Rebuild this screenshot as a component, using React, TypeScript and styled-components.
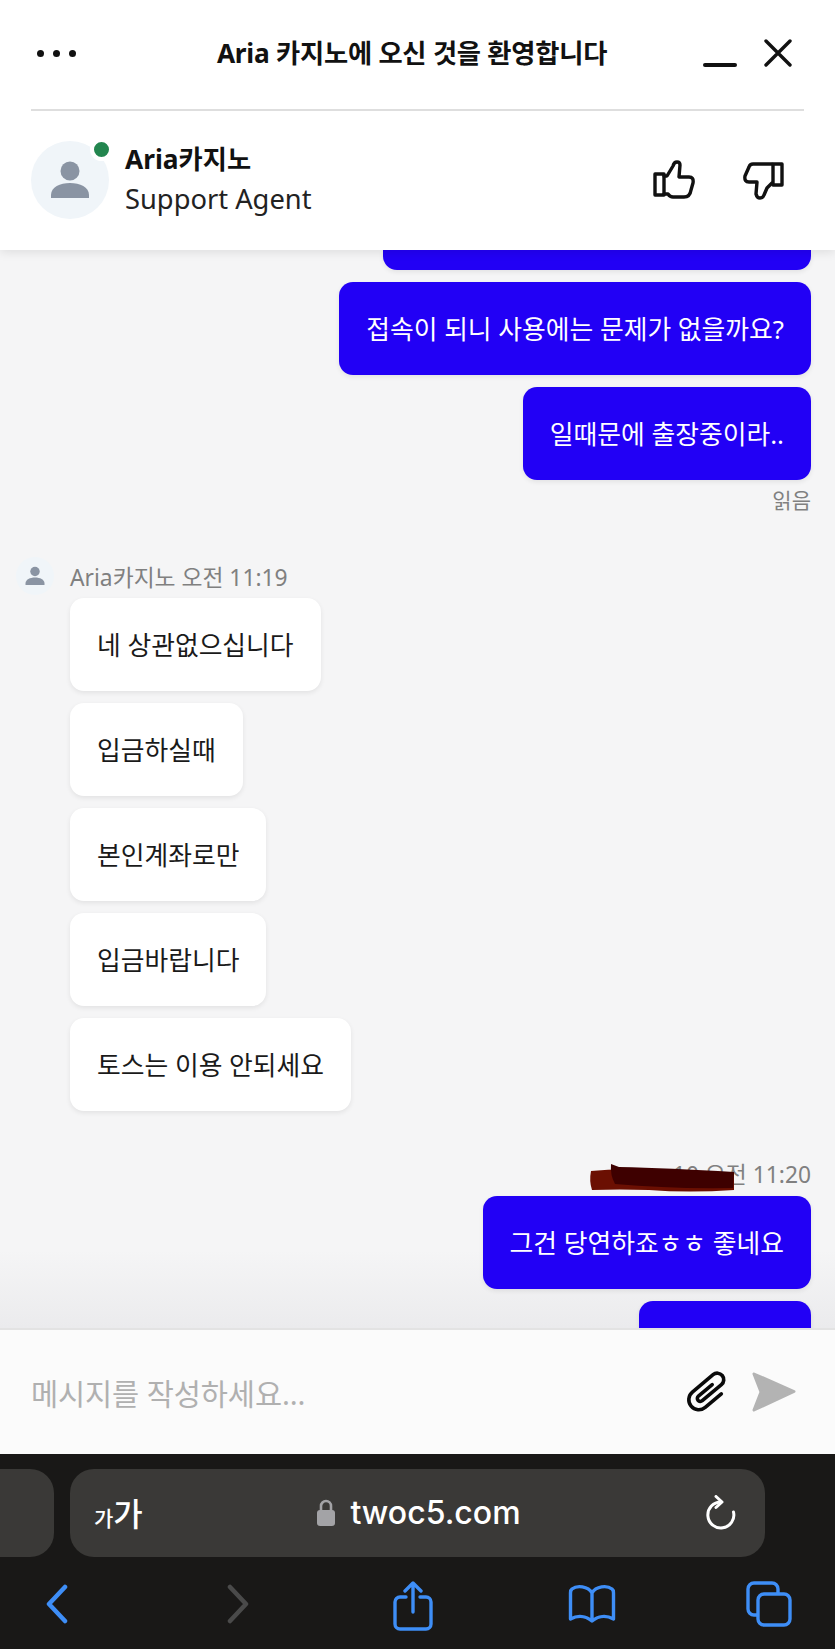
import React from "react";
import styled, { createGlobalStyle } from "styled-components";

const GlobalStyle = createGlobalStyle`
  html, body {
    margin: 0;
    padding: 0;
    background: #f5f5f6;
  }
  * {
    box-sizing: border-box;
  }
  body {
    font-family: "Noto Sans", "Noto Sans CJK KR", sans-serif;
  }
`;

const Page = styled.div`
  width: 835px;
  height: 1649px;
  display: flex;
  flex-direction: column;
  overflow: hidden;
`;

const Header = styled.header`
  height: 250px;
  flex: none;
  background: #fff;
  box-shadow: 0 2px 10px rgba(0, 0, 0, 0.1);
  position: relative;
  z-index: 2;
`;

const TitleBar = styled.div`
  height: 111px;
  margin: 0 31px;
  padding-bottom: 3px;
  display: flex;
  align-items: center;
  justify-content: space-between;
  border-bottom: 2px solid #dedede;
`;

const Dots = styled.div`
  display: flex;
  gap: 9px;
  margin-left: 6px;
  width: 85px;
  span {
    width: 7px;
    height: 7px;
    border-radius: 50%;
    background: #111;
  }
`;

const Title = styled.h1`
  margin: 0;
  font-size: 26.300px;
  font-weight: 700;
  color: #111;
  line-height: 34px;
  letter-spacing: -0.25px;
`;

const WindowButtons = styled.div`
  width: 100px;
  display: flex;
  justify-content: flex-end;
  align-items: center;
  gap: 27px;
  padding-right: 10px;
  margin-right: 2px;
`;

const AgentRow = styled.div`
  display: flex;
  align-items: center;
  padding: 29px 31px 0;
`;

const BigAvatar = styled.div`
  width: 78px;
  height: 78px;
  border-radius: 50%;
  background: #f0f5f9;
  position: relative;
  display: flex;
  align-items: center;
  justify-content: center;
  flex: none;
`;

const StatusDot = styled.span`
  position: absolute;
  top: -3px;
  right: -4px;
  width: 23px;
  height: 23px;
  border-radius: 50%;
  background: #23864f;
  border: 4px solid #fff;
`;

const AgentText = styled.div`
  margin-left: 16px;
  flex: 1;
  display: flex;
  flex-direction: column;
`;

const AgentName = styled.div`
  font-size: 26.300px;
  font-weight: 700;
  line-height: 38px;
  color: #111;
`;

const AgentRole = styled.div`
  font-size: 27.300px;
  line-height: 42px;
  color: #222;
`;

const Rating = styled.div`
  display: flex;
  gap: 48px;
  margin-right: 19px;
`;

const Chat = styled.main`
  flex: 1;
  overflow: hidden;
  display: flex;
  flex-direction: column;
  background: linear-gradient(
    to bottom,
    #f5f5f6 0,
    #f5f5f6 1000px,
    #ebebed 100%
  );
  padding: 0 24px 0 0;
`;

const Bubble = styled.div<{ $mine?: boolean }>`
  align-self: ${(p) => (p.$mine ? "flex-end" : "flex-start")};
  height: 93px;
  margin: 0 0 12px ${(p) => (p.$mine ? "0" : "70px")};
  padding: 0 27px;
  display: flex;
  align-items: center;
  border-radius: 14px;
  font-size: 25.800px;
  line-height: 36px;
  background: ${(p) => (p.$mine ? "#2200f5" : "#fff")};
  color: ${(p) => (p.$mine ? "#fff" : "#1a1a1a")};
  box-shadow: 0 2px 5px rgba(0, 0, 0, 0.08);
  flex: none;
`;

const ClippedTop = styled(Bubble)`
  width: 428px;
  height: 20px;
  border-radius: 0 0 14px 14px;
`;

const ClippedBottom = styled(Bubble)`
  width: 172px;
  height: 28px;
  margin-bottom: 0;
  border-radius: 14px 14px 0 0;
`;

const ReadMark = styled.div`
  align-self: flex-end;
  font-size: 21px;
  line-height: 30px;
  color: #808080;
  margin-top: -7px;
`;

const SenderRow = styled.div`
  display: flex;
  align-items: center;
  gap: 16px;
  height: 38px;
  margin: 42px 0 3px 16px;
  font-size: 22.800px;
  color: #808080;
`;

const SmallAvatar = styled.div`
  width: 38px;
  height: 38px;
  border-radius: 50%;
  background: #f0f5f9;
  display: flex;
  align-items: center;
  justify-content: center;
`;

const SentTime = styled.div`
  position: relative;
  align-self: flex-end;
  height: 30px;
  line-height: 30px;
  font-size: 22.800px;
  color: #808080;
  margin: 37px 0 6px;
`;

const Scribble = styled.svg`
  position: absolute;
  right: 76px;
  top: 3px;
`;

const Composer = styled.div`
  height: 126px;
  flex: none;
  background: #fbfbfb;
  border-top: 2px solid #e3e3e3;
  display: flex;
  align-items: center;
  padding: 0 38px 0 31px;
  z-index: 2;
`;

const Placeholder = styled.div`
  flex: 1;
  font-size: 29.500px;
  letter-spacing: -0.1px;
  color: #b0b0b0;
`;

const ComposerIcons = styled.div`
  display: flex;
  align-items: center;
  gap: 21px;
`;

const BrowserBar = styled.div`
  height: 195px;
  flex: none;
  background: #191817;
  display: flex;
  flex-direction: column;
`;

const AddressRow = styled.div`
  display: grid;
  grid-template-columns: 54px 695px;
  gap: 16px;
  margin-top: 15px;
`;

const OtherTab = styled.div`
  height: 88px;
  background: #3a3937;
  border-radius: 0 24px 24px 0;
`;

const AddressBox = styled.div`
  height: 88px;
  background: #3a3937;
  border-radius: 24px;
  display: grid;
  grid-template-columns: 1fr auto 1fr;
  align-items: center;
  padding: 0 28px 0 24px;
`;

const AaButton = styled.div`
  display: flex;
  align-items: baseline;
  color: #fff;
  font-family: "Noto Sans CJK KR", sans-serif;
  font-weight: 500;
  margin-top: -3px;
`;

const AaSmall = styled.span`
  font-size: 21px;
`;

const AaLarge = styled.span`
  font-size: 32px;
`;

const UrlGroup = styled.div`
  display: flex;
  align-items: center;
  gap: 14px;
  margin-left: 6px;
`;

const Url = styled.span`
  font-family: "Inter", sans-serif;
  font-size: 32px;
  font-weight: 500;
  line-height: 40px;
  color: #fff;
`;

const ReloadSlot = styled.div`
  display: flex;
  justify-content: flex-end;
`;

const NavRow = styled.nav`
  display: flex;
  align-items: center;
  margin-top: 22px;
  height: 50px;
  padding-left: 45px;
`;

const NavSlot = styled.div<{ $w: number }>`
  width: ${(p) => p.$w}px;
  flex: none;
  display: flex;
`;

const ShareSlot = styled(NavSlot)`
  padding-top: 3px;
`;

const Person = ({ size }: { size: number }) => (
  <svg width={size} height={size} viewBox="0 0 40 40" fill="#8a94a3">
    <circle cx="20" cy="11" r="9.5" />
    <path d="M1 38v-3c0-8 9-12 19-12s19 4 19 12v3z" />
  </svg>
);

const Thumb = ({ down }: { down?: boolean }) =>
  down ? (
    <svg width="42" height="42" viewBox="0 0 42 42" fill="none" stroke="#111" strokeWidth="3.4" strokeLinejoin="round" strokeLinecap="round">
      <path d="M29 5H10Q7 5 6 8L2 17Q1 23 6 23H14L13 35Q14 39 17 39Q20 39 21 36L24 29L29 24" />
      <rect x="30" y="5" width="9" height="21" />
    </svg>
  ) : (
    <svg width="42" height="42" viewBox="0 0 42 42" fill="none" stroke="#111" strokeWidth="3.4" strokeLinejoin="round" strokeLinecap="round">
      <rect x="2" y="15" width="9" height="21" />
      <path d="M11 17H14L20 7Q21 3 24 3Q27 3 27 6L26 18H36Q41 18 40 24L38 31Q37 38 31 38H20Q17 38 15 35H11" />
    </svg>
  );

const Clip = () => (
  <svg width="44" height="42" viewBox="-22 -21 44 42" fill="none" stroke="#0a0a0a" strokeWidth="3.6" strokeLinecap="round">
    <g transform="rotate(-40)">
      <path d="M9 10H-12A10 10 0 0 1 -12 -10H15A6.500 6.500 0 0 1 15 3H-10A3 3 0 0 1 -10 -3H8" />
    </g>
  </svg>
);

const Send = () => (
  <svg width="46" height="42" viewBox="0 0 46 42">
    <path d="M3 3L43 20.500L3 39L10 21z" fill="#b3b3b3" stroke="#b3b3b3" strokeWidth="3" strokeLinejoin="round" />
  </svg>
);

const Chevron = ({ back, color }: { back?: boolean; color: string }) => (
  <svg width="23" height="40" viewBox="0 0 23 40" fill="none" stroke={color} strokeWidth="4.500" strokeLinecap="round" strokeLinejoin="round">
    <path d={back ? "M20 3L4 20L20 37" : "M3 3L19 20L3 37"} />
  </svg>
);

const BLUE = "#3e8ef7";

const ShareIcon = () => (
  <svg width="40" height="50" viewBox="0 0 40 50" fill="none" stroke={BLUE} strokeWidth="3.400" strokeLinecap="round" strokeLinejoin="round">
    <path d="M13 16H7a5 5 0 0 0-5 5V43a5 5 0 0 0 5 5H33a5 5 0 0 0 5-5V21a5 5 0 0 0-5-5H27" />
    <path d="M20 31V3M12 10L20 2L28 10" />
  </svg>
);

const BookIcon = () => (
  <svg width="48" height="40" viewBox="0 0 48 40" fill="none" stroke={BLUE} strokeWidth="3.400" strokeLinecap="round" strokeLinejoin="round">
    <path d="M24 9C20 2 9 1 4 5Q2.500 6 2.500 9V35C10 31 18 32 24 37C30 32 38 31 45.500 35V9Q45.500 6 44 5C39 1 28 2 24 9V37" />
  </svg>
);

const TabsIcon = () => (
  <svg width="46" height="46" viewBox="0 0 46 46" fill="none" stroke={BLUE} strokeWidth="3.400" strokeLinecap="round" strokeLinejoin="round">
    <path d="M11 34H8a6 6 0 0 1-6-6V8a6 6 0 0 1 6-6H26a6 6 0 0 1 6 6V12" />
    <rect x="12" y="13" width="32" height="31" rx="6" />
  </svg>
);

const agentMessages = [
  "네 상관없으십니다",
  "입금하실때",
  "본인계좌로만",
  "입금바랍니다",
  "토스는 이용 안되세요",
];

export default function App() {
  return (
    <Page>
      <GlobalStyle />
      <Header>
        <TitleBar>
          <Dots>
            <span />
            <span />
            <span />
          </Dots>
          <Title>Aria 카지노에 오신 것을 환영합니다</Title>
          <WindowButtons>
            <svg width="34" height="32" viewBox="0 0 34 32" stroke="#111" strokeWidth="4" strokeLinecap="round">
              <path d="M2 28H32" />
            </svg>
            <svg width="28" height="28" viewBox="0 0 28 28" stroke="#111" strokeWidth="3.400" strokeLinecap="round">
              <path d="M2 2L26 26M26 2L2 26" />
            </svg>
          </WindowButtons>
        </TitleBar>
        <AgentRow>
          <BigAvatar>
            <Person size={40} />
            <StatusDot />
          </BigAvatar>
          <AgentText>
            <AgentName>Aria카지노</AgentName>
            <AgentRole>Support Agent</AgentRole>
          </AgentText>
          <Rating>
            <Thumb />
            <Thumb down />
          </Rating>
        </AgentRow>
      </Header>
      <Chat>
        <ClippedTop $mine />
        <Bubble $mine>접속이 되니 사용에는 문제가 없을까요?</Bubble>
        <Bubble $mine>일때문에 출장중이라..</Bubble>
        <ReadMark>읽음</ReadMark>
        <SenderRow>
          <SmallAvatar>
            <Person size={20} />
          </SmallAvatar>
          <span>Aria카지노 오전 11:19</span>
        </SenderRow>
        {agentMessages.map((m) => (
          <Bubble key={m}>{m}</Bubble>
        ))}
        <SentTime>
          10 오전 11:20
          <Scribble width="146" height="30" viewBox="0 0 146 30">
            <path d="M2 8Q30 5 60 7Q110 7 145 10L145 27Q100 30 60 27Q30 26 3 27Q0 18 2 8z" fill="#6b0f02" />
            <path d="M22 1L30 4Q80 5 145 9L144 25Q80 26 26 21Q21 12 22 1z" fill="#3e0000" />
          </Scribble>
        </SentTime>
        <Bubble $mine>그건 당연하죠ㅎㅎ 좋네요</Bubble>
        <ClippedBottom $mine />
      </Chat>
      <Composer>
        <Placeholder>메시지를 작성하세요...</Placeholder>
        <ComposerIcons>
          <Clip />
          <Send />
        </ComposerIcons>
      </Composer>
      <BrowserBar>
        <AddressRow>
          <OtherTab />
          <AddressBox>
            <AaButton>
              <AaSmall>가</AaSmall>
              <AaLarge>가</AaLarge>
            </AaButton>
            <UrlGroup>
              <svg width="20" height="28" viewBox="0 0 20 28">
                <path d="M5 12V7a5 5 0 0 1 10 0V12" fill="none" stroke="#a3a3a6" strokeWidth="2.600" />
                <rect x="1" y="11" width="18" height="16" rx="3" fill="#a3a3a6" />
              </svg>
              <Url>twoc5.com</Url>
            </UrlGroup>
            <ReloadSlot>
              <svg width="32" height="36" viewBox="0 0 32 36" fill="none" stroke="#fff" strokeWidth="3" strokeLinecap="round" strokeLinejoin="round">
                <path d="M16 7A13 13 0 1 0 28.500 17" />
                <path d="M11 1.500L17 7L11 12.500" />
              </svg>
            </ReloadSlot>
          </AddressBox>
        </AddressRow>
        <NavRow>
          <NavSlot $w={182}>
            <Chevron back color={BLUE} />
          </NavSlot>
          <NavSlot $w={166}>
            <Chevron color="#4a4a4a" />
          </NavSlot>
          <ShareSlot $w={175}>
            <ShareIcon />
          </ShareSlot>
          <NavSlot $w={178}>
            <BookIcon />
          </NavSlot>
          <NavSlot $w={46}>
            <TabsIcon />
          </NavSlot>
        </NavRow>
      </BrowserBar>
    </Page>
  );
}
